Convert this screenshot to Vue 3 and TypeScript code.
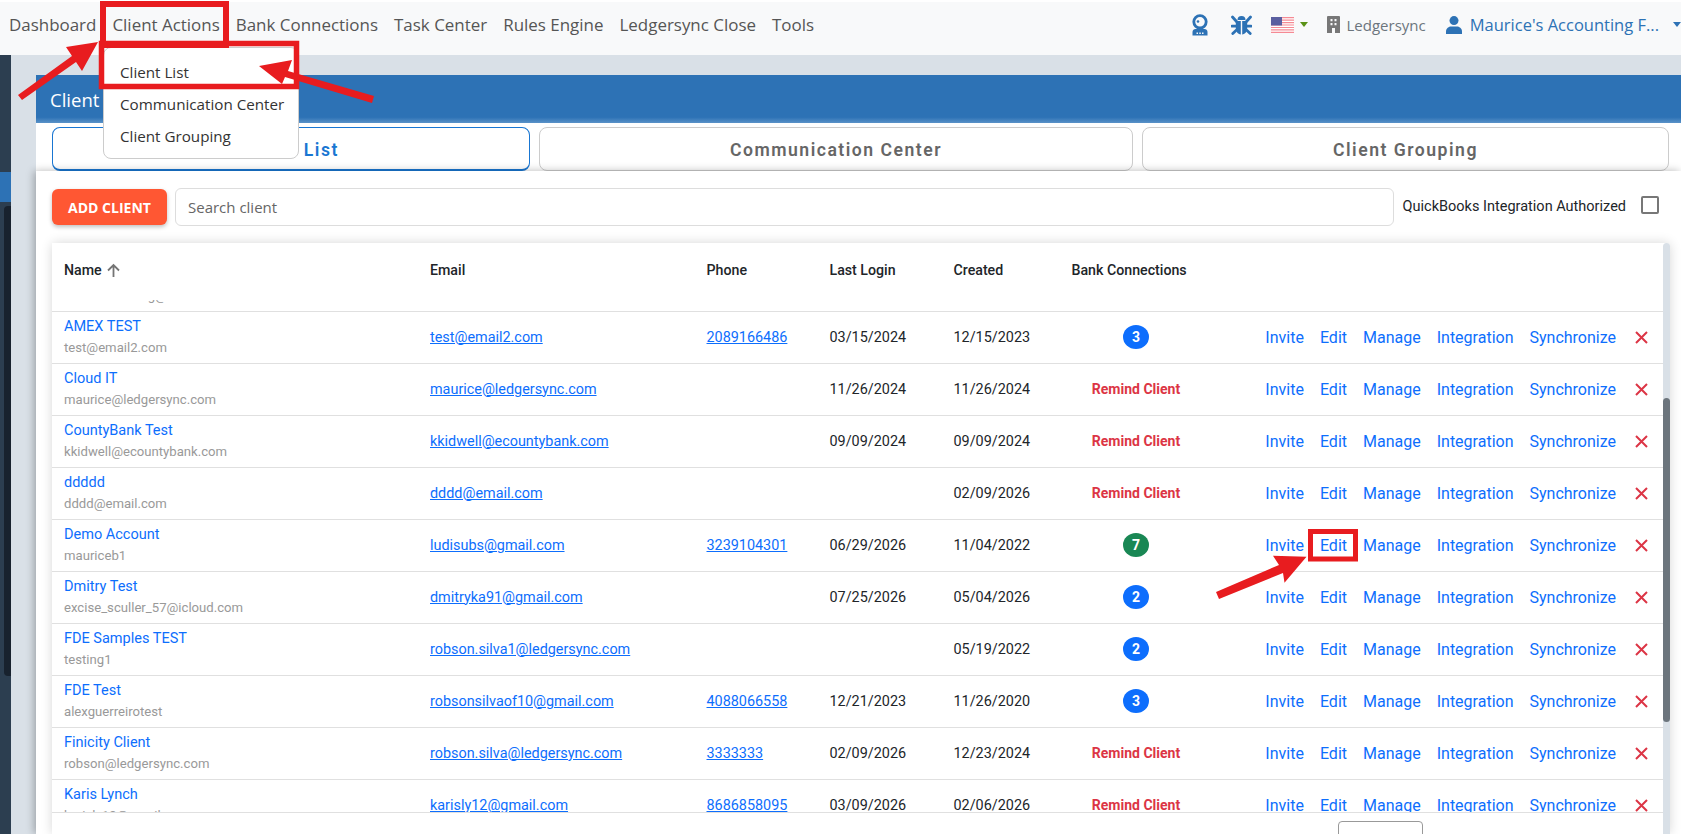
<script setup lang="ts">
interface Client {
  name: string
  sub: string
  email: string
  phone?: string
  login?: string
  created: string
  banks?: number
  tone?: 'blue' | 'green'
}

const navItems = [
  'Dashboard',
  'Client Actions',
  'Bank Connections',
  'Task Center',
  'Rules Engine',
  'Ledgersync Close',
  'Tools',
]
const menuItems = ['Client List', 'Communication Center', 'Client Grouping']
const tabs = ['Client List', 'Communication Center', 'Client Grouping']
const actions = ['Invite', 'Edit', 'Manage', 'Integration', 'Synchronize']

const clients: Client[] = [
  { name: 'Amanda Testing', sub: 'maurice.testing@email.com', email: 'maurice.testing@email.com', created: '01/10/2024', banks: 1, tone: 'blue' },
  { name: 'AMEX TEST', sub: 'test@email2.com', email: 'test@email2.com', phone: '2089166486', login: '03/15/2024', created: '12/15/2023', banks: 3, tone: 'blue' },
  { name: 'Cloud IT', sub: 'maurice@ledgersync.com', email: 'maurice@ledgersync.com', login: '11/26/2024', created: '11/26/2024' },
  { name: 'CountyBank Test', sub: 'kkidwell@ecountybank.com', email: 'kkidwell@ecountybank.com', login: '09/09/2024', created: '09/09/2024' },
  { name: 'ddddd', sub: 'dddd@email.com', email: 'dddd@email.com', created: '02/09/2026' },
  { name: 'Demo Account', sub: 'mauriceb1', email: 'ludisubs@gmail.com', phone: '3239104301', login: '06/29/2026', created: '11/04/2022', banks: 7, tone: 'green' },
  { name: 'Dmitry Test', sub: 'excise_sculler_57@icloud.com', email: 'dmitryka91@gmail.com', login: '07/25/2026', created: '05/04/2026', banks: 2, tone: 'blue' },
  { name: 'FDE Samples TEST', sub: 'testing1', email: 'robson.silva1@ledgersync.com', created: '05/19/2022', banks: 2, tone: 'blue' },
  { name: 'FDE Test', sub: 'alexguerreirotest', email: 'robsonsilvaof10@gmail.com', phone: '4088066558', login: '12/21/2023', created: '11/26/2020', banks: 3, tone: 'blue' },
  { name: 'Finicity Client', sub: 'robson@ledgersync.com', email: 'robson.silva@ledgersync.com', phone: '3333333', login: '02/09/2026', created: '12/23/2024' },
  { name: 'Karis Lynch', sub: 'karisly12@gmail.com', email: 'karisly12@gmail.com', phone: '8686858095', login: '03/09/2026', created: '02/06/2026' },
]
</script>

<template>
  <div class="page">
    <nav class="navbar">
      <a v-for="item in navItems" :key="item" class="nav-link">{{ item }}</a>
      <div class="nav-right">
        <svg class="ic robot" width="20" height="22" viewBox="0 0 20 22">
          <circle cx="10" cy="7.800" r="6.200" fill="none" stroke="#2d72b5" stroke-width="2.800" />
          <circle cx="8" cy="7.500" r="1.300" fill="#2d72b5" />
          <path d="M2.500 21.500v-3.500c0-2 1.500-3 3-3h9c1.500 0 3 1 3 3v3.500z" fill="#2d72b5" />
          <path d="M6.500 18.500h1.500v1.500H6.500zM9.300 18.500h1.500v1.500H9.300zM12 18.500h1.500v1.500H12z" fill="#f8f9fa" />
        </svg>
        <svg class="ic bug" width="21" height="20" viewBox="0 0 21 20">
          <path d="M6.500 5a4 4 0 0 1 8 0z" fill="#2d72b5" />
          <path d="M4.800 6h5v13.500C6.800 19 4.800 16.500 4.800 13zM16.200 6h-5v13.500c3-.5 5-3 5-6.500z" fill="#2d72b5" />
          <path d="M1.500 2 5.500 6.500M19.500 2 15.500 6.500M1 11.200H5M20 11.200H16M1.800 18.500 5.500 15M19.200 18.500 15.500 15" stroke="#2d72b5" stroke-width="2.800" stroke-linecap="round" fill="none" />
        </svg>
        <svg class="ic flag" width="23" height="16" viewBox="0 0 23 16">
          <rect width="23" height="16" fill="#fff" />
          <path d="M0 0h23v1.200H0zM0 2.500h23v1.200H0zM0 5h23v1.200H0zM0 7.400h23v1.200H0zM0 9.900h23v1.200H0zM0 12.300h23v1.200H0zM0 14.800h23V16H0z" fill="#f58a94" />
          <rect width="11" height="8.500" fill="#5a5fa0" />
        </svg>
        <span class="caret green"></span>
        <svg class="ic building" width="13" height="17" viewBox="0 0 13 17">
          <path fill-rule="evenodd" d="M1 0h11a1 1 0 0 1 1 1v16H0V1a1 1 0 0 1 1-1zM3.500 3v2.200h2V3zM7.500 3v2.200h2V3zM3.500 7v2.200h2V7zM7.500 7v2.200h2V7zM5 12v5h3v-5z" fill="#777" />
        </svg>
        <span class="org">Ledgersync</span>
        <svg class="ic person" width="16" height="18" viewBox="0 0 16 18">
          <circle cx="8" cy="4.600" r="4.500" fill="#2d72b5" />
          <path d="M0 18v-2.500C0 12 3 10.500 5 10.500h6c2 0 5 1.500 5 5V18z" fill="#2d72b5" />
        </svg>
        <span class="account">Maurice's Accounting F...</span>
        <span class="caret blue"></span>
      </div>
    </nav>

    <div class="body">
      <aside class="sidebar">
        <div class="side-active"></div>
        <div class="side-thumb"></div>
      </aside>

      <main class="main">
        <header class="panel-title">Client List</header>
        <div class="tabs">
          <button
            v-for="(tab, i) in tabs"
            :key="tab"
            class="tab"
            :class="{ active: i === 0 }"
          >
            {{ tab }}
          </button>
        </div>

        <section class="panel-body">
          <div class="toolbar">
            <button class="add-btn">ADD CLIENT</button>
            <input class="search" type="text" placeholder="Search client" />
            <label class="qb-label">QuickBooks Integration Authorized</label>
            <span class="checkbox"></span>
          </div>

          <div class="table-card">
            <div class="table-wrap">
              <div class="scroll-area">
                <div class="row head">
                  <div class="cell name-head">
                    <span>Name</span>
                    <svg width="15" height="15" viewBox="0 0 15 15">
                      <path d="M7.500 14V2M2 7.500l5.500-5.500 5.500 5.500" fill="none" stroke="#757575" stroke-width="1.800" />
                    </svg>
                  </div>
                  <div class="cell">Email</div>
                  <div class="cell">Phone</div>
                  <div class="cell">Last Login</div>
                  <div class="cell">Created</div>
                  <div class="cell">Bank Connections</div>
                  <div class="cell"></div>
                </div>

                <div class="rows">
                  <div v-for="c in clients" :key="c.name" class="row">
                    <div class="cell who">
                      <a class="name">{{ c.name }}</a>
                      <span class="sub">{{ c.sub }}</span>
                    </div>
                    <div class="cell"><a class="mail">{{ c.email }}</a></div>
                    <div class="cell"><a class="mail">{{ c.phone }}</a></div>
                    <div class="cell">{{ c.login }}</div>
                    <div class="cell">{{ c.created }}</div>
                    <div class="cell bank">
                      <span v-if="c.banks" class="badge" :class="c.tone">{{ c.banks }}</span>
                      <span v-else class="remind">Remind Client</span>
                    </div>
                    <div class="cell acts">
                      <a v-for="a in actions" :key="a" class="act">{{ a }}</a>
                      <svg class="del" width="13" height="13" viewBox="0 0 13 13">
                        <path d="M1 1l11 11M12 1 1 12" stroke="#dc3545" stroke-width="2" fill="none" />
                      </svg>
                    </div>
                  </div>
                </div>
              </div>
              <footer class="table-foot">
                <span class="page-box"></span>
              </footer>
            </div>
            <div class="scrollbar"><div class="thumb"></div></div>
          </div>
        </section>
      </main>
    </div>

    <div class="menu">
      <a v-for="item in menuItems" :key="item" class="menu-item">{{ item }}</a>
    </div>

    <!-- red markup drawn over the screenshot -->
    <svg class="markup" width="1681" height="834" viewBox="0 0 1681 834">
      <g fill="none" stroke="#e81c1f">
        <rect x="103" y="4" width="123" height="41" stroke-width="6" />
        <rect x="101.500" y="43.500" width="195" height="43" stroke-width="5.500" />
        <rect x="1310.500" y="531.500" width="45" height="27.500" stroke-width="5" />
      </g>
      <g fill="#e81c1f">
        <polygon points="18,95 72,56 66,47 98,42 82,71 76,62 22,100" />
        <polygon points="259,66 292,60 288,71 374,96 372,103 285,77 282,84" />
        <polygon points="1306.500,556.700 1273,555.700 1279,565 1216,592 1219,599 1283,573 1284.500,582.700" />
      </g>
    </svg>
  </div>
</template>

<style>
html,
body {
  margin: 0;
  overflow: hidden;
}
</style>

<style scoped>
.page {
  position: relative;
  display: flex;
  flex-direction: column;
  width: 100%;
  height: 834px;
  overflow: hidden;
  padding-top: 2px;
  box-sizing: border-box;
  background: #fff;
  font-family: Roboto, sans-serif;
  color: #212529;
}

.navbar {
  display: flex;
  align-items: center;
  gap: 16px;
  height: 53px;
  flex: none;
  padding-left: 9px;
  padding-bottom: 8px;
  box-sizing: border-box;
  background: #f8f9fa;
  font-family: 'Open Sans', sans-serif;
  font-size: 16.950px;
  color: #555;
}

.nav-right {
  display: flex;
  align-items: center;
  margin-left: auto;
}

.ic {
  display: block;
  flex: none;
}

.robot {
  margin-right: 21px;
}

.bug {
  margin-right: 19px;
}

.flag {
  margin-right: 6px;
}

.caret {
  width: 0;
  height: 0;
  border-left: 4px solid transparent;
  border-right: 4px solid transparent;
  border-top: 5px solid #5a9216;
}

.caret.green {
  margin-right: 19px;
}

.caret.blue {
  margin-left: 14px;
  border-top-color: #2d72b5;
}

.org {
  margin: 0 20px 0 7px;
  font-size: 15px;
  color: #6c757d;
}

.account {
  margin-left: 8px;
  font-size: 16.500px;
  color: #2d72b5;
}

.body {
  display: flex;
  flex: 1;
  min-height: 0;
  background: #d9e0e7;
}

.sidebar {
  position: relative;
  flex: none;
  width: 11px;
  background: #2c3e50;
}

.side-active {
  height: 30px;
  margin-top: 117px;
  background: #2d72b5;
}

.side-thumb {
  width: 7px;
  height: 470px;
  margin: 4px 0 0 4px;
  border-radius: 4px 0 0 4px;
  background: #18222e;
}

.main {
  display: flex;
  flex-direction: column;
  flex: 1;
  min-width: 0;
  margin: 20px 0 0 25px;
}

.panel-title {
  height: 48px;
  flex: none;
  padding-left: 14px;
  box-sizing: border-box;
  font-family: 'Open Sans', sans-serif;
  font-size: 18.500px;
  line-height: 50px;
  color: #fff;
  background: linear-gradient(#2d72b5 88%, #5a92c8);
}

.tabs {
  display: grid;
  grid-template-columns: 478px 594px 527px;
  gap: 9px;
  height: 48px;
  flex: none;
  padding: 4px 12px 0 16px;
  box-sizing: border-box;
  background: #fff;
}

.tab {
  height: 44px;
  padding: 2px 0 0;
  border: 1px solid #ccc;
  border-radius: 8px;
  background: #fff;
  font-family: Roboto, sans-serif;
  font-size: 17.600px;
  font-weight: 600;
  letter-spacing: 1.500px;
  color: #666;
}

.tab.active {
  border-color: #1976d2;
  border-bottom-width: 2px;
  color: #1976d2;
}

.panel-body {
  display: flex;
  flex-direction: column;
  flex: 1;
  min-height: 0;
  padding: 17px 11px 0 16px;
  background: #fff;
  box-shadow: -2px 0 8px rgba(0, 0, 0, 0.28);
}

.toolbar {
  display: flex;
  align-items: center;
  height: 38px;
  flex: none;
}

.add-btn {
  width: 115px;
  height: 36px;
  flex: none;
  border: 0;
  border-radius: 6px;
  background: #ff5733;
  box-shadow: 0 2px 4px rgba(0, 0, 0, 0.25);
  font-family: 'Open Sans', sans-serif;
  font-size: 14px;
  font-weight: 700;
  color: #fff;
}

.search {
  flex: 1;
  height: 38px;
  min-width: 0;
  margin-left: 8px;
  padding: 0 12px;
  box-sizing: border-box;
  border: 1px solid #ddd;
  border-radius: 6px;
  outline: none;
  font-family: 'Open Sans', sans-serif;
  font-size: 15px;
}

.search::placeholder {
  color: #666;
}

.qb-label {
  margin-left: 9px;
  padding-bottom: 2px;
  font-size: 14.500px;
  color: #212529;
}

.checkbox {
  width: 14px;
  height: 14px;
  flex: none;
  margin: 0 11px 4px 15px;
  border: 2px solid #777;
  border-radius: 2px;
}

.table-card {
  display: flex;
  flex: 1;
  min-height: 0;
  margin-top: 17px;
  border-radius: 4px 4px 0 0;
  background: #fff;
  box-shadow: 0 0 12px rgba(0, 0, 0, 0.16);
}

.table-wrap {
  display: flex;
  flex-direction: column;
  flex: 1;
  min-width: 0;
}

.scroll-area {
  position: relative;
  height: 569px;
  flex: none;
  overflow: hidden;
}

.row {
  display: grid;
  grid-template-columns: 366px 276.500px 123px 124px 118px 153px 1fr;
  height: 52px;
  box-sizing: border-box;
  border-bottom: 1px solid #e0e0e0;
  font-size: 14.400px;
}

.row.head {
  position: relative;
  z-index: 1;
  height: 57px;
  border-bottom: 0;
  background: #fff;
  font-size: 14.200px;
  font-weight: 500;
}

.row.head .cell {
  align-self: start;
  height: 54px;
}

.rows {
  margin-top: -40px;
}

.cell {
  display: flex;
  align-items: center;
  padding: 0 12px 1px;
  min-width: 0;
  white-space: nowrap;
}

.name-head {
  gap: 4px;
}

.who {
  flex-direction: column;
  align-items: flex-start;
  justify-content: center;
  gap: 1px;
}

.name {
  font-size: 14.500px;
  line-height: 20px;
  color: #0d6efd;
}

.sub {
  font-size: 13.150px;
  line-height: 20px;
  color: #999;
}

.mail {
  color: #0d6efd;
  text-decoration: underline;
}

.bank {
  justify-content: center;
  padding-bottom: 0;
}

.badge {
  width: 26px;
  height: 24px;
  margin-bottom: 1px;
  border-radius: 50%;
  font-size: 14px;
  font-weight: 700;
  line-height: 24px;
  text-align: center;
  color: #fff;
}

.badge.blue {
  background: #0d6efd;
}

.badge.green {
  background: #198754;
}

.remind {
  margin-bottom: 1px;
  font-weight: 700;
  font-size: 14px;
  color: #dc3545;
}

.acts {
  justify-content: flex-end;
  gap: 16px;
  padding-right: 15px;
  font-size: 16px;
}

.act {
  color: #0d6efd;
}

.del {
  margin-left: 3px;
}

.table-foot {
  flex: 1;
  display: flex;
  justify-content: flex-start;
  padding-left: 1286px;
  border-top: 1px solid #e0e0e0;
  background: #fff;
}

.page-box {
  width: 83px;
  height: 30px;
  margin-top: 8px;
  border: 1px solid #999;
  border-radius: 4px;
  flex: none;
}

.scrollbar {
  position: relative;
  width: 7px;
  flex: none;
  border-radius: 4px 4px 0 0;
  background: #d9e0e7;
}

.thumb {
  position: absolute;
  top: 155px;
  left: 0;
  width: 7px;
  height: 324px;
  border-radius: 4px;
  background: #6c757d;
}

.menu {
  position: absolute;
  z-index: 5;
  top: 47px;
  left: 103px;
  display: flex;
  flex-direction: column;
  width: 196px;
  height: 112px;
  padding-top: 8px;
  box-sizing: border-box;
  border: 1px solid #ccc;
  border-radius: 8px;
  background: #fff;
  font-family: 'Open Sans', sans-serif;
  font-size: 15.200px;
  color: #333;
}

.menu-item {
  height: 32px;
  padding-left: 16px;
  line-height: 32px;
}

.markup {
  position: absolute;
  z-index: 6;
  top: 0;
  left: 0;
  pointer-events: none;
}
</style>
